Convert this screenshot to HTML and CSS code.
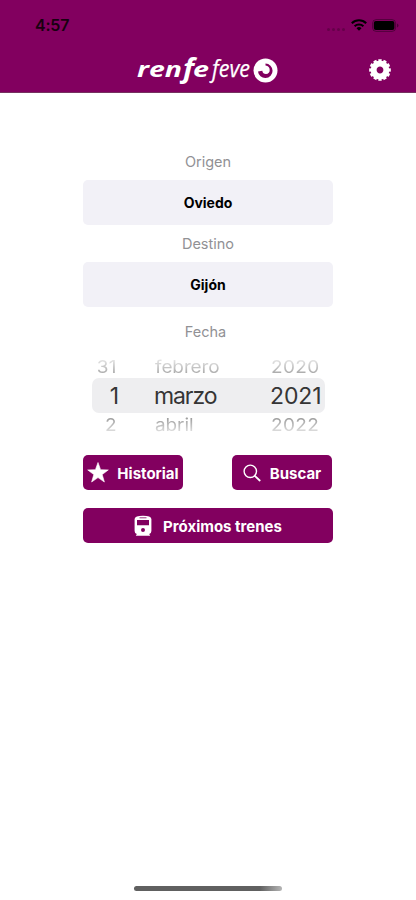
FILE: index.html
```html
<!DOCTYPE html>
<html lang="es">
<head>
<meta charset="utf-8">
<meta name="viewport" content="width=device-width, initial-scale=1">
<title>Renfe Feve</title>
<link rel="stylesheet" href="styles.css">
</head>
<body>
<header class="header">
  <div class="status">
    <span class="time">4:57</span>
    <div class="indicators">
      <span class="dots"><i></i><i></i><i></i><i></i></span>
      <svg class="wifi" width="16" height="12" viewBox="0 0 16 12"><g fill="none" stroke="#000" stroke-width="2.1"><path d="M.8 4.2a10.3 10.3 0 0 1 14.4 0"/><path d="M3.6 7.2a6.4 6.4 0 0 1 8.8 0"/></g><path d="M5.500 9.200a3.600 3.600 0 0 1 5 0L8 11.700z"/></svg>
      <svg class="battery" width="27" height="13" viewBox="0 0 27 13"><rect x=".6" y=".6" width="23" height="11.800" rx="3.600" fill="none" stroke="#000" stroke-opacity=".38"/><rect x="1.800" y="2" width="20.600" height="9" rx="2"/><path d="M25 4.500q1.500.5 1.500 2t-1.500 2z" fill-opacity=".4"/></svg>
    </div>
  </div>
  <div class="nav">
    <svg class="logo" width="144" height="40" viewBox="0 -3 144 40">
      <text class="renfe" x="1" y="24" textLength="45" lengthAdjust="spacingAndGlyphs">ren</text>
      <text class="renfe-f" x="47" y="25" textLength="11" lengthAdjust="spacingAndGlyphs">f</text>
      <text class="renfe" x="57" y="24" textLength="16" lengthAdjust="spacingAndGlyphs">e</text>
      <text class="feve" x="76" y="24" textLength="38" lengthAdjust="spacingAndGlyphs">feve</text>
      <circle cx="129.500" cy="17.500" r="12" fill="#fff"/>
      <path d="M129.500 10.500A7.300 7.300 0 1 1 122 18.500l4.300-.7q.5 3.200 3.700 3.200 3.700-.3 3.700-4 0-3.800-4.200-4.500z" fill="#82005f"/>
    </svg>
    <svg class="gear" width="22" height="22" viewBox="-11 -11 22 22"><circle r="6.400" fill="none" stroke="#fff" stroke-width="6"/><circle r="9.700" fill="none" stroke="#fff" stroke-width="2.300" pathLength="120" stroke-dasharray="6.500 3.500" stroke-dashoffset="3.250"/></svg>
  </div>
</header>
<main class="form">
  <label class="label">Origen</label>
  <button class="field">Oviedo</button>
  <label class="label destination">Destino</label>
  <button class="field">Gijón</button>
  <label class="label date">Fecha</label>
  <div class="wheel">
    <div class="row previous"><span class="day">31</span><span class="month">febrero</span><span class="year">2020</span></div>
    <div class="row selected"><span class="day">1</span><span class="month">marzo</span><span class="year">2021</span></div>
    <div class="row next"><span class="day">2</span><span class="month">abril</span><span class="year">2022</span></div>
  </div>
  <div class="actions">
    <button class="button history"><svg width="22" height="21" viewBox="0 0 22 21"><path fill="#fff" stroke="#fff" stroke-width=".6" stroke-linejoin="round" d="M11 .5l2.600 7.200 7.700.2-6.100 4.700 2.200 7.400L11 15.600 4.600 20l2.200-7.400L.7 7.900l7.700-.2z"/></svg><span>Historial</span></button>
    <button class="button search"><svg width="18" height="18" viewBox="0 0 18 18"><g fill="none" stroke="#fff" stroke-width="1.400" stroke-linecap="round"><circle cx="7.300" cy="7.300" r="6.200"/><path d="M11.800 11.800l4.900 4.700" stroke-width="1.800"/></g></svg><span>Buscar</span></button>
  </div>
  <button class="button trains"><svg width="18" height="22" viewBox="0 0 18 22"><path fill="#fff" fill-rule="evenodd" d="M.6 4Q1 .8 9 .8T17.400 4v12q0 2.300-2.200 3l1 1.700H1.800L2.800 19q-2.200-.7-2.200-3zM3 5v5.200h12V5zM9 13a2 2 0 1 0 0 4 2 2 0 0 0 0-4z"/><path d="M5.500 2.800h7" stroke="#82005f" stroke-width=".8"/></svg><span>Próximos trenes</span></button>
</main>
<footer class="home"><div class="bar"></div></footer>
</body>
</html>
```
FILE: styles.css
```css
* { box-sizing: border-box; }
body {
  margin: 0;
  height: 900px;
  display: flex;
  flex-direction: column;
  overflow: hidden;
  background: #fff;
  font-family: Inter, "Liberation Sans", sans-serif;
}
button { border: 0; padding: 0; font: inherit; }
svg { display: block; flex: none; }
.header { height: 93px; background: #82005f; border-bottom: 1px solid #75325f; }
.status {
  height: 50px;
  padding: 0 18px 0 35px;
  display: flex;
  justify-content: space-between;
  align-items: center;
}
.time { font-size: 16px; font-weight: 600; letter-spacing: -.2px; color: #180010; }
.indicators { display: flex; align-items: center; }
.dots { display: flex; gap: 2px; margin: 8px 6px 0 0; }
.dots i { width: 3px; height: 3px; border-radius: 50%; background: #650049; }
.wifi { margin-right: 5px; }
.battery { margin-right: -1px; }
.nav {
  height: 40px;
  padding: 0 25px 0 136px;
  display: flex;
  justify-content: space-between;
  align-items: center;
}
.logo { fill: #fff; overflow: visible; }
.renfe { font: italic 700 22px "Open Sans", sans-serif; }
.renfe-f { font: italic 700 26px "Open Sans", sans-serif; }
.feve { font: italic 400 24px "Open Sans", sans-serif; stroke: #fff; stroke-width: .25px; }
.form {
  width: 250px;
  margin: 59px 0 0 83px;
  display: flex;
  flex-direction: column;
}
.label {
  height: 20px;
  margin-bottom: 8px;
  line-height: 20px;
  font-size: 14.500px;
  text-align: center;
  color: #919195;
}
.destination { margin-top: 9px; }
.date { margin-top: 14px; margin-bottom: 17px; padding-right: 5px; line-height: 21px; }
.field {
  height: 45px;
  border-radius: 5px;
  background: #f2f1f7;
  color: #000;
  font-size: 14px;
  font-weight: 700;
}
.wheel { width: 233px; margin-left: 9px; }
.row {
  height: 20px;
  display: grid;
  grid-template-columns: 28px 82px 1fr;
  column-gap: 34px;
  align-items: center;
  white-space: nowrap;
  font-size: 19px;
  color: #777;
}
.day { text-align: right; }
.row span { line-height: 20px; }
.previous span, .next span { transform: scaleY(.9); }
.previous { -webkit-mask-image: linear-gradient(#0002, #000b 95%); mask-image: linear-gradient(#0002, #000b 95%); }
.previous .month, .next .month { margin-left: 1px; letter-spacing: -.1px; }
.previous .day, .next .day { margin-right: 3px; letter-spacing: .4px; }
.previous .year, .next .year { margin-left: 1px; letter-spacing: .4px; }
.selected {
  height: 35px;
  border-radius: 7px;
  background: #eeeef0;
  color: #353535;
  font-size: 23px;
  letter-spacing: -1.100px;
}
.selected .day { margin-right: 2px; }
.selected .year { letter-spacing: -.1px; }
.selected span { padding-top: 1px; }
.next { height: 23px; -webkit-mask-image: linear-gradient(#000b 20%, #0002 95%); mask-image: linear-gradient(#000b 20%, #0002 95%); }
.next span { padding-top: 2px; }
.actions { margin-top: 19px; display: flex; justify-content: space-between; }
.button {
  height: 35px;
  display: flex;
  align-items: center;
  justify-content: center;
  border-radius: 5px;
  background: #82005f;
  color: #fff;
  font-size: 15px;
  font-weight: 700;
  white-space: nowrap;
}
.button span { padding-top: 1px; }
.history { width: 100px; gap: 8px; }
.search { width: 100px; gap: 9px; margin-right: 1px; }
.trains { margin-top: 18px; gap: 11px; }
.home { margin-top: auto; height: 14px; padding-left: 134px; }
.bar { width: 148px; height: 5px; border-radius: 3px; background: linear-gradient(90deg, #606060 85%, #b5b5b5); }
```
